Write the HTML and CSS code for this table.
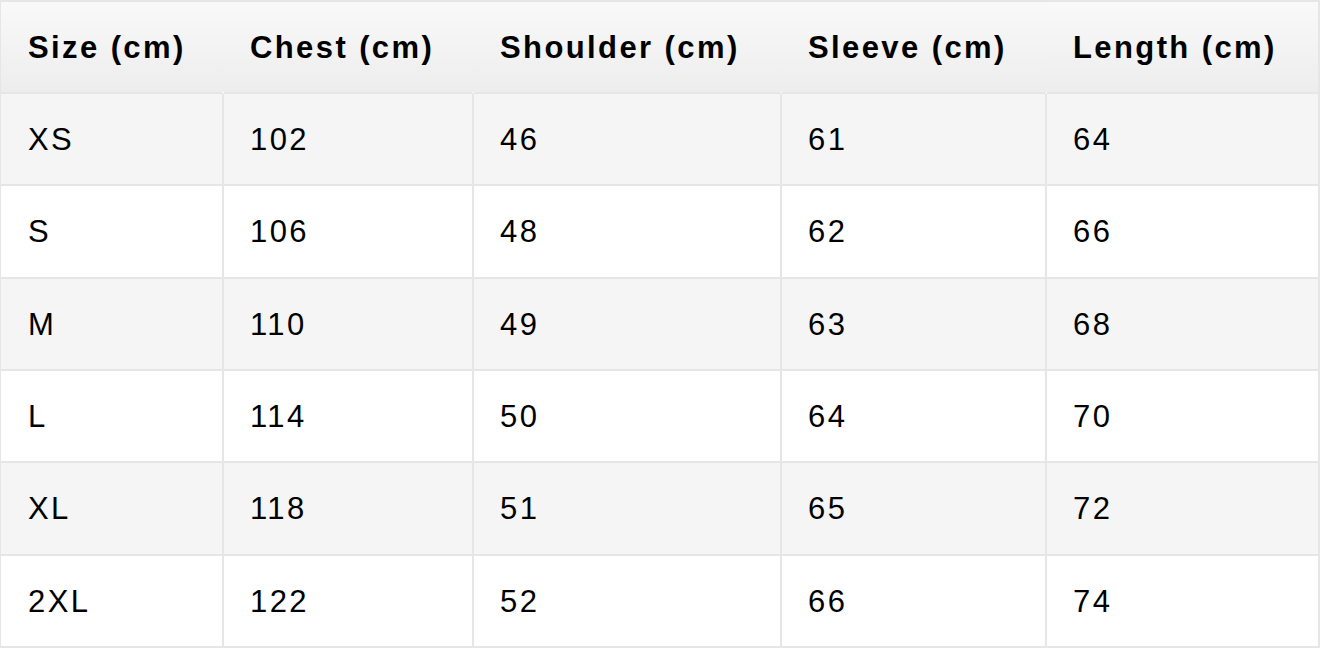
FILE: index.html
```html
<!DOCTYPE html>
<html lang="en">
<head>
<meta charset="utf-8">
<title>Size chart</title>
<link rel="stylesheet" href="styles.css">
</head>
<body>
<table class="size-table">
  <colgroup>
    <col class="c1"><col class="c2"><col class="c3"><col class="c4"><col class="c5">
  </colgroup>
  <thead>
    <tr><th>Size (cm)</th><th>Chest (cm)</th><th>Shoulder (cm)</th><th>Sleeve (cm)</th><th>Length (cm)</th></tr>
  </thead>
  <tbody>
    <tr><td>XS</td><td>102</td><td>46</td><td>61</td><td>64</td></tr>
    <tr><td>S</td><td>106</td><td>48</td><td>62</td><td>66</td></tr>
    <tr><td>M</td><td>110</td><td>49</td><td>63</td><td>68</td></tr>
    <tr><td>L</td><td>114</td><td>50</td><td>64</td><td>70</td></tr>
    <tr><td>XL</td><td>118</td><td>51</td><td>65</td><td>72</td></tr>
    <tr><td>2XL</td><td>122</td><td>52</td><td>66</td><td>74</td></tr>
  </tbody>
</table>
</body>
</html>
```
FILE: styles.css
```css
html, body {
  margin: 0;
  padding: 0;
  background: #ffffff;
}

.size-table {
  table-layout: fixed;
  border-collapse: separate;
  border-spacing: 0;
  width: 1319px;
  border-left: 1px solid #e6e6e6;
  border-top: 2px solid #e6e6e6;
  font-family: "Liberation Sans", Arial, sans-serif;
  font-size: 31px;
  letter-spacing: 2.4px;
  color: #000000;
}

.c1 { width: 223px; }
.c2 { width: 250px; }
.c3 { width: 308px; }
.c4 { width: 265px; }
.c5 { width: 273px; }

.size-table th,
.size-table td {
  box-sizing: border-box;
  padding: 2px 0 0 26px;
  text-align: left;
  vertical-align: middle;
  border-right: 2px solid #e6e6e6;
  border-bottom: 2px solid #e6e6e6;
  white-space: nowrap;
}

.size-table th:first-child,
.size-table td:first-child {
  padding-left: 27px;
}

.size-table th {
  height: 92px;
  font-weight: bold;
  background: linear-gradient(to bottom, #f9f9f9, #ededed);
  border-right-color: transparent;
}

.size-table th:last-child {
  border-right-color: #e6e6e6;
}

.size-table td {
  height: 92.33px;
  font-weight: normal;
}

.size-table tbody tr:nth-child(odd) td {
  background: #f5f5f5;
}

.size-table tbody tr:nth-child(even) td {
  background: #ffffff;
}
```
